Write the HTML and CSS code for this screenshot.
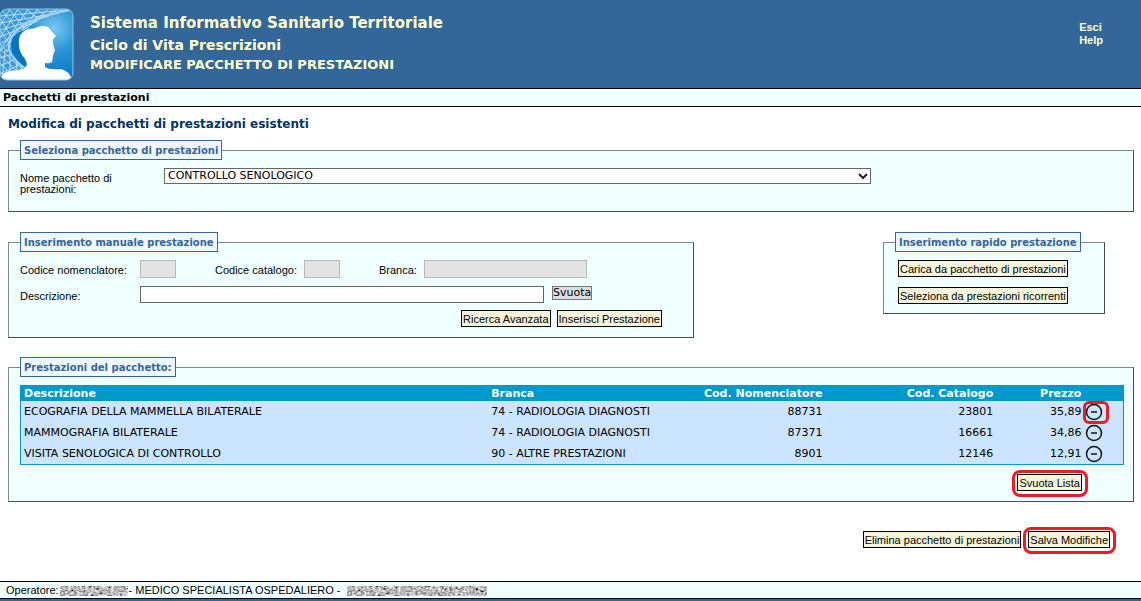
FILE: index.html
```html
<!DOCTYPE html>
<html lang="it">
<head>
<meta charset="utf-8">
<title>Modificare pacchetto di prestazioni</title>
<link rel="stylesheet" href="styles.css">
</head>
<body>
<header class="banner">
  <svg class="logo" viewBox="0 0 75 73" aria-hidden="true">
    <defs>
      <radialGradient id="sky" cx="0.72" cy="0.28" r="0.75">
        <stop offset="0" stop-color="#7cc8f0"/>
        <stop offset="0.4" stop-color="#2d98d8"/>
        <stop offset="1" stop-color="#0474c0"/>
      </radialGradient>
      <clipPath id="tile"><rect x="0" y="1" width="73" height="71" rx="7"/></clipPath>
    </defs>
    <g clip-path="url(#tile)">
      <rect width="75" height="73" fill="url(#sky)"/>
      <path d="M0 0H70L52 7Q28 14 16 26Q8 38 14 50L28 62V73H0Z" fill="#3c9ad6"/>
      <path d="M0 8L68 2M0 15L58 5M0 22L49 8M0 29L38 13M0 36L28 19M0 43L20 25M0 30L18 1M0 42L28 1M0 18L10 1M6 44L38 1M10 35L48 1M22 20L58 1M1 1L20 25M9 1L25 20M17 1L32 17M26 1L40 12M36 1L48 9M0 10L13 32M0 22L10 37M0 36L8 44M0 47L26 72M0 55L18 73M0 64L10 73M0 41L28 66M0 50L12 46M0 58L16 51M0 66L21 56M3 72L26 61M5 42L2 73M10 46L10 73M16 52L18 73M20 56L25 70" fill="none" stroke="#c8e6f7" stroke-width="0.9"/>
      <path d="M70 2Q30 10 18 21Q4 35 11 46Q17 55 26 61" fill="none" stroke="#a5d5f1" stroke-width="2"/>
      <path d="M28 21Q11 25 11 37Q13 49 25 58L26 52L19 40Z" fill="#0474c0"/>
      <path d="M0 72Q2 64 10 63L23 61Q26 60 27 56Q26 51 22 47Q18 41 19 31Q20 24 28 21Q34 21 38 19Q43 17 48 19L53 25L56 28Q52 31 53 35L55 43Q53 45 53 48L52 54Q50 56 45 55V59Q49 62 61 61Q69 63 72 71L70 73H0Z" fill="#fff"/>
    </g>
    <rect x="0" y="1" width="73" height="71" rx="7" fill="none" stroke="#8cc4ea"/>
  </svg>
  <div class="titles">
    <div class="title-main">Sistema Informativo Sanitario Territoriale</div>
    <div class="title-sub">Ciclo di Vita Prescrizioni</div>
    <div class="title-page">MODIFICARE PACCHETTO DI PRESTAZIONI</div>
  </div>
  <nav class="session"><a href="#esci">Esci</a><a href="#help">Help</a></nav>
</header>
<nav class="menu"><a href="#pacchetti">Pacchetti di prestazioni</a></nav>

<main class="content">
  <h1 class="heading">Modifica di pacchetti di prestazioni esistenti</h1>

  <fieldset class="panel panel-package">
    <legend>Seleziona pacchetto di prestazioni</legend>
    <div class="package-row">
      <label for="pacchetto">Nome pacchetto di prestazioni:</label>
      <div class="select-box">
        <select id="pacchetto"><option>CONTROLLO SENOLOGICO</option></select>
        <svg class="chevron" viewBox="0 0 10 7" aria-hidden="true"><path d="M1 1L5 5L9 1" fill="none" stroke="#222" stroke-width="2"/></svg>
      </div>
    </div>
  </fieldset>

  <div class="insert-row">
    <fieldset class="panel panel-manual">
      <legend>Inserimento manuale prestazione</legend>
      <div class="fields">
        <label class="first" for="nomenclatore">Codice nomenclatore:</label>
        <input class="code" id="nomenclatore" type="text" disabled>
        <label class="catalog" for="catalogo">Codice catalogo:</label>
        <input class="code" id="catalogo" type="text" disabled>
        <label class="branch" for="branca">Branca:</label>
        <input class="branch-input" id="branca" type="text" disabled>
      </div>
      <div class="fields">
        <label class="first" for="descrizione">Descrizione:</label>
        <input class="description" id="descrizione" type="text">
        <button class="clear" type="button">Svuota</button>
      </div>
      <div class="manual-actions">
        <button class="btn" type="button">Ricerca Avanzata</button>
        <button class="btn" type="button">Inserisci Prestazione</button>
      </div>
    </fieldset>
    <fieldset class="panel panel-quick">
      <legend>Inserimento rapido prestazione</legend>
      <div class="quick-actions">
        <button class="btn" type="button">Carica da pacchetto di prestazioni</button>
        <button class="btn" type="button">Seleziona da prestazioni ricorrenti</button>
      </div>
    </fieldset>
  </div>

  <fieldset class="panel panel-list">
    <legend>Prestazioni del pacchetto:</legend>
    <table class="services">
      <colgroup><col class="c-desc"><col class="c-branch"><col class="c-nom"><col class="c-cat"><col class="c-price"><col></colgroup>
      <thead>
        <tr><th>Descrizione</th><th>Branca</th><th class="num">Cod. Nomenclatore</th><th class="num">Cod. Catalogo</th><th class="num">Prezzo</th><td></td></tr>
      </thead>
      <tbody>
        <tr><td>ECOGRAFIA DELLA MAMMELLA BILATERALE</td><td>74 - RADIOLOGIA DIAGNOSTI</td><td class="num">88731</td><td class="num">23801</td><td class="num">35,89</td>
          <td class="action"><button class="remove marked" type="button" aria-label="Rimuovi"><svg viewBox="0 0 18 18"><circle cx="9" cy="9" r="7.5"/><path d="M6 9H12"/></svg></button></td></tr>
        <tr><td>MAMMOGRAFIA BILATERALE</td><td>74 - RADIOLOGIA DIAGNOSTI</td><td class="num">87371</td><td class="num">16661</td><td class="num">34,86</td>
          <td class="action"><button class="remove" type="button" aria-label="Rimuovi"><svg viewBox="0 0 18 18"><circle cx="9" cy="9" r="7.5"/><path d="M6 9H12"/></svg></button></td></tr>
        <tr><td>VISITA SENOLOGICA DI CONTROLLO</td><td>90 - ALTRE PRESTAZIONI</td><td class="num">8901</td><td class="num">12146</td><td class="num">12,91</td>
          <td class="action"><button class="remove" type="button" aria-label="Rimuovi"><svg viewBox="0 0 18 18"><circle cx="9" cy="9" r="7.5"/><path d="M6 9H12"/></svg></button></td></tr>
      </tbody>
    </table>
    <div class="list-actions"><button class="btn marked" type="button">Svuota Lista</button></div>
  </fieldset>

  <div class="page-actions">
    <button class="btn" type="button">Elimina pacchetto di prestazioni</button>
    <button class="btn marked" type="button">Salva Modifiche</button>
  </div>
</main>

<footer class="status">
  <span>Operatore:</span>
  <svg class="mask mask-name" aria-hidden="true">
    <filter id="grain" x="0" y="0" width="100%" height="100%">
      <feTurbulence type="fractalNoise" baseFrequency="0.35 0.45" numOctaves="2" seed="4"/>
      <feColorMatrix values="1.4 0.6 0 0 -0.5  1.4 0.6 0 0 -0.5  1.4 0.6 0 0 -0.5  0 0 0 0 1"/>
    </filter>
    <rect width="100%" height="100%" filter="url(#grain)"/>
  </svg>
  <span>- MEDICO SPECIALISTA OSPEDALIERO -</span>
  <svg class="mask mask-site" aria-hidden="true"><rect width="100%" height="100%" filter="url(#grain)"/></svg>
</footer>
</body>
</html>
```
FILE: styles.css
```css
* { box-sizing: border-box; }

body {
  margin: 0;
  min-height: 100vh;
  display: flex;
  flex-direction: column;
  background: #fff;
  color: #000;
  font: 11px/13px "Liberation Sans", Arial, sans-serif;
}

button, input, select { font: inherit; color: inherit; margin: 0; border-radius: 0; }
a { color: inherit; text-decoration: none; }

.banner {
  display: flex;
  align-items: flex-start;
  height: 89px;
  padding-right: 38px;
  background: #336699;
  border-bottom: 1px solid #000;
  color: #ffffcc;
  font-weight: bold;
}
.logo { width: 75px; height: 73px; margin: 8px 15px 0 0; flex: none; }
.titles { flex: 1; padding-top: 12px; font-family: Verdana, "DejaVu Sans", sans-serif; }
.title-main { font-size: 15px; line-height: 22px; }
.title-sub { font-size: 14px; line-height: 22px; }
.title-page { font-size: 13px; line-height: 18px; }
.session { display: flex; flex-direction: column; padding-top: 21px; }

.menu {
  height: 18px;
  padding: 0 3px;
  background: #f0ffff;
  border-bottom: 1px solid #000;
  font: bold 11px/18px Verdana, "DejaVu Sans", sans-serif;
}

.content { flex: 1; padding: 0 7px 0 8px; }
.heading {
  margin: 8px 0 7px;
  color: #003366;
  font: bold 12px/18px Verdana, "DejaVu Sans", sans-serif;
}

.panel {
  min-width: 0;
  margin: 0;
  padding: 0 9px 0 11px;
  background: #f0ffff;
  border: 1px solid;
  border-color: #7d8888 #444c4c #444c4c #7d8888;
}
.panel legend {
  height: 20px;
  padding: 0 3px;
  border: 1px solid #336699;
  background: #f0f8ff;
  color: #336699;
  font: bold 10px/19px Verdana, "DejaVu Sans", sans-serif;
}

.package-row { display: flex; padding: 8px 0 16px; }
.package-row label { width: 144px; padding: 5px 30px 0 0; line-height: 11px; }
.select-box { position: relative; width: 64%; }
.select-box select {
  display: block;
  width: 100%;
  height: 16px;
  padding: 0 3px;
  appearance: none;
  border: 1px solid #666;
  background: #fff;
  font: 11px/14px Verdana, "DejaVu Sans", sans-serif;
}
.chevron { position: absolute; right: 3px; top: 5px; width: 10px; height: 7px; pointer-events: none; }

.insert-row {
  display: flex;
  justify-content: space-between;
  align-items: flex-start;
  margin: 20px 29px 19px 0;
}
.panel-manual { width: 686px; flex-shrink: 1; }
.panel-quick { width: 222px; padding-right: 0; }

.fields { display: flex; align-items: flex-start; padding-top: 8px; }
.fields label { padding-top: 4px; white-space: nowrap; }
.fields .first { width: 120px; }
.fields .catalog { width: 89px; margin-left: 39px; }
.fields .branch { width: 45px; margin-left: 39px; }
.fields input { height: 18px; padding: 0 2px; border: 1px solid #666; background: #fff; }
.fields input:disabled { border-color: #b8b8b8; background: #e3e3e3; }
.fields .code { width: 36px; }
.fields .branch-input { width: 163px; }
.fields .description { width: 404px; height: 17px; }
.clear {
  height: 14px;
  margin-left: 8px;
  padding: 0;
  border: 1px solid #777;
  background: #ddd;
  font: 11px/12px Verdana, "DejaVu Sans", sans-serif;
}

.btn {
  position: relative;
  height: 17px;
  padding: 0 1px;
  border: 1px solid #000;
  background: #f5f5dc;
  line-height: 14px;
  white-space: nowrap;
}
.manual-actions { display: flex; justify-content: flex-end; gap: 6px; padding: 7px 22px 10px 0; }
.quick-actions { display: flex; flex-direction: column; align-items: flex-start; gap: 10px; padding: 8px 0 9px 3px; }

.services {
  width: 100%;
  margin-top: 8px;
  table-layout: fixed;
  border-collapse: separate;
  border-spacing: 0;
  border: 1px solid #0099cc;
  background: #cce5ff;
  font: 11px/15px Verdana, "DejaVu Sans", sans-serif;
}
.services th { text-align: left; }
.services th, .services thead td { height: 15px; padding: 0 3px; background: #0099cc; color: #fff; white-space: nowrap; }
.services td { height: 21px; padding: 0 3px; white-space: nowrap; }
.services .num { text-align: right; }
.services .action { padding: 0 0 0 1px; }
.c-desc { width: 42.4%; }
.c-branch { width: 15.6%; }
.c-nom { width: 15%; }
.c-cat { width: 15.5%; }
.c-price { width: 8%; }

.remove { display: block; position: relative; width: 18px; height: 18px; padding: 0; border: 0; background: none; }
.remove svg { display: block; fill: none; stroke: #111; stroke-width: 1.5; }

/* Red outline drawn around highlighted controls */
.marked::after {
  content: "";
  position: absolute;
  inset: -5px -7px -7px -6px;
  border: 3px solid #ed1c24;
  border-radius: 8px;
}
.remove.marked::after { inset: -2px -6px -3px -2px; border-radius: 6px; }

.list-actions { display: flex; justify-content: flex-end; padding: 9px 42px 10px 0; }
.page-actions { display: flex; justify-content: flex-end; gap: 7px; padding: 29px 24px 32px 0; }

.status {
  display: flex;
  align-items: center;
  height: 20px;
  padding-left: 6px;
  background: #f0ffff;
  border-top: 1px solid #000;
  border-bottom: 2px solid #336699;
  box-shadow: inset 0 -1px #000;
  white-space: nowrap;
}
.mask { height: 10px; flex: none; }
.mask-name { width: 68px; margin: 0 1px; }
.mask-site { width: 140px; margin-left: 6px; }
```
